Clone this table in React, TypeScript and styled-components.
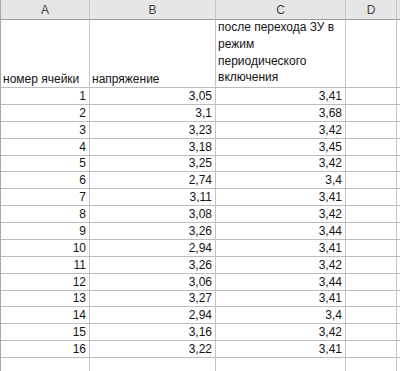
import React from "react";
import styled, { createGlobalStyle } from "styled-components";

const GlobalStyle = createGlobalStyle`
  html, body {
    margin: 0;
    padding: 0;
    background: #ffffff;
  }
  body {
    font-family: "Liberation Sans", Arial, sans-serif;
  }
`;

const Sheet = styled.div`
  display: grid;
  grid-template-columns: 89px 126px 130px 51px 4px;
  grid-template-rows: 20px 68px repeat(17, 16.875px);
  width: 400px;
  height: 371px;
  overflow: hidden;
  border-left: 1px solid #a8a8a8;
  box-sizing: border-box;
  font-size: 12px;
  color: #141414;
`;

const ColHead = styled.div`
  background: #e6e6e6;
  color: #444444;
  border-right: 1px solid #c6c6c6;
  border-bottom: 1px solid #9c9c9c;
  display: flex;
  align-items: center;
  justify-content: center;
  font-size: 12px;
`;

const Cell = styled.div<{ $align?: "left" | "right" }>`
  border-right: 1px solid #c4c4c4;
  border-bottom: 1px solid #bdbdbd;
  display: flex;
  align-items: flex-end;
  justify-content: ${(p) => (p.$align === "right" ? "flex-end" : "flex-start")};
  padding: 0 3px 0 2px;
  white-space: nowrap;
  overflow: hidden;
  line-height: 15px;
`;

const WrapText = styled.div`
  line-height: 16.7px;
  white-space: nowrap;
  padding-bottom: 1px;
`;

const rows: [number, string, string][] = [
  [1, "3,05", "3,41"],
  [2, "3,1", "3,68"],
  [3, "3,23", "3,42"],
  [4, "3,18", "3,45"],
  [5, "3,25", "3,42"],
  [6, "2,74", "3,4"],
  [7, "3,11", "3,41"],
  [8, "3,08", "3,42"],
  [9, "3,26", "3,44"],
  [10, "2,94", "3,41"],
  [11, "3,26", "3,42"],
  [12, "3,06", "3,44"],
  [13, "3,27", "3,41"],
  [14, "2,94", "3,4"],
  [15, "3,16", "3,42"],
  [16, "3,22", "3,41"],
];

export default function App() {
  return (
    <>
      <GlobalStyle />
      <Sheet>
        <ColHead>A</ColHead>
        <ColHead>B</ColHead>
        <ColHead>C</ColHead>
        <ColHead>D</ColHead>
        <ColHead />

        <Cell>номер ячейки</Cell>
        <Cell>напряжение</Cell>
        <Cell>
          <WrapText>
            после перехода ЗУ в<br />
            режим<br />
            периодического<br />
            включения
          </WrapText>
        </Cell>
        <Cell />
        <Cell />

        {rows.map(([n, v, w]) => (
          <React.Fragment key={n}>
            <Cell $align="right">{n}</Cell>
            <Cell $align="right">{v}</Cell>
            <Cell $align="right">{w}</Cell>
            <Cell />
            <Cell />
          </React.Fragment>
        ))}
        <Cell />
        <Cell />
        <Cell />
        <Cell />
        <Cell />
      </Sheet>
    </>
  );
}
